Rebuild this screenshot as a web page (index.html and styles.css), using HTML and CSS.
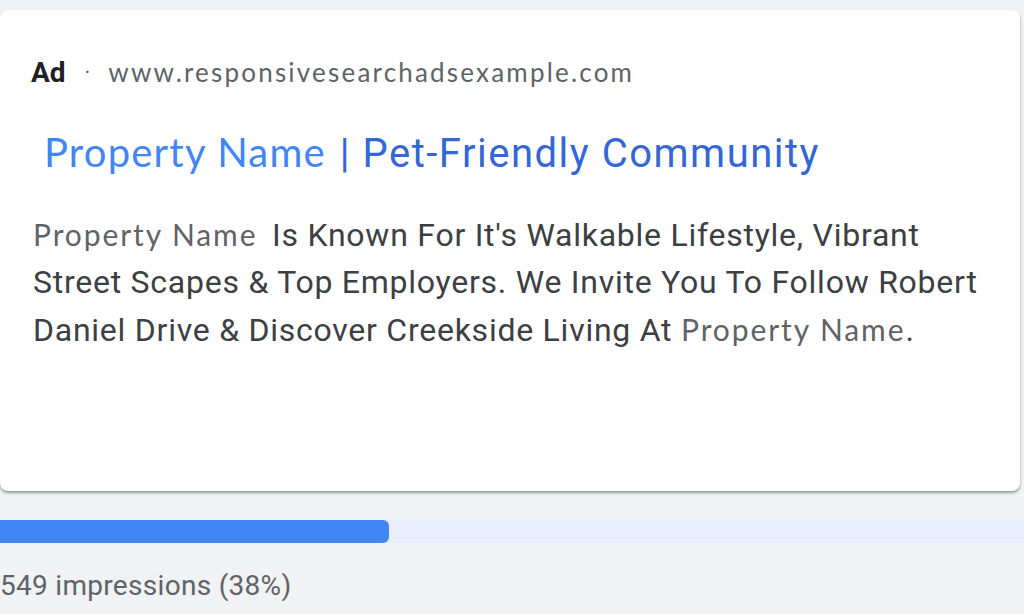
FILE: index.html
```html
<!DOCTYPE html>
<html lang="en">
<head>
  <meta charset="UTF-8">
  <title>Ad Preview</title>
  <link rel="stylesheet" href="styles.css">
</head>
<body>

  <div class="ad-card">
    <div class="ad-top">
      <span class="ad-label">Ad</span>
      <span class="ad-dot">·</span>
      <span class="ad-url">www.responsivesearchadsexample.com</span>
    </div>

    <div class="ad-title">
      <span class="geo">Property Name</span>
      <span class="title-rest">| Pet-Friendly Community</span>
    </div>

    <p class="ad-desc">
      <span class="geo-gray lead">Property Name</span>
      <span class="desc-text">Is Known For It's Walkable Lifestyle, Vibrant Street Scapes &amp; Top Employers. We Invite You To Follow Robert Daniel Drive &amp; Discover Creekside Living At</span>
      <span class="geo-gray">Property Name</span>.
    </p>
  </div>

  <div class="bar-track">
    <div class="bar-fill" style="width: 389px"></div>
  </div>

  <div class="impressions">549 impressions (38%)</div>

</body>
</html>
```

FILE: styles.css
```css
body {
  margin: 0;
  background: #f1f2f4;
  font-family: Roboto, "Liberation Sans", sans-serif;
  overflow: hidden;
}
.ad-card {
  background: #fff;
  margin: 10px 4px 0 0;
  height: 481px;
  box-sizing: border-box;
  padding: 42px 25px 0 31px;
  border-radius: 8px;
  box-shadow: 0 2px 3px rgba(0, 0, 0, 0.38);
}
.ad-top {
  display: flex;
  align-items: center;
  height: 40px;
}
.ad-label {
  font-weight: bold;
  font-size: 28px;
  color: #202124;
}
.ad-dot {
  color: #5f6368;
  font-size: 22px;
  margin: 0 18px 0 19px;
}
.ad-url {
  font-family: Lato, sans-serif;
  font-size: 26px;
  color: #5f6368;
  letter-spacing: 2.2px;
}
.ad-title {
  margin-top: 35px;
  padding-left: 13px;
  line-height: 50px;
  white-space: nowrap;
}
.geo {
  font-family: Lato, sans-serif;
  font-size: 40px;
  color: #4285f4;
  letter-spacing: 1.2px;
  margin-right: 10px;
}
.title-rest {
  font-size: 40px;
  color: #3367d6;
  letter-spacing: 1.5px;
}
.ad-desc {
  margin: 24px 0 0;
  padding-left: 2px;
  font-size: 32px;
  line-height: 47px;
  color: #3c4043;
  letter-spacing: 0.75px;
}
.geo-gray {
  font-family: Lato, sans-serif;
  font-size: 30px;
  color: #5f6368;
  letter-spacing: 1.9px;
}
.lead {
  margin-right: 6px;
}
.bar-track {
  margin-top: 29px;
  height: 23px;
  background: #e8eefc;
}
.bar-fill {
  height: 100%;
  background: #4285f4;
  border-radius: 0 6px 6px 0;
}
.impressions {
  margin-top: 28px;
  font-size: 28px;
  line-height: 30px;
  color: #5f6368;
  letter-spacing: 0.3px;
}
```
